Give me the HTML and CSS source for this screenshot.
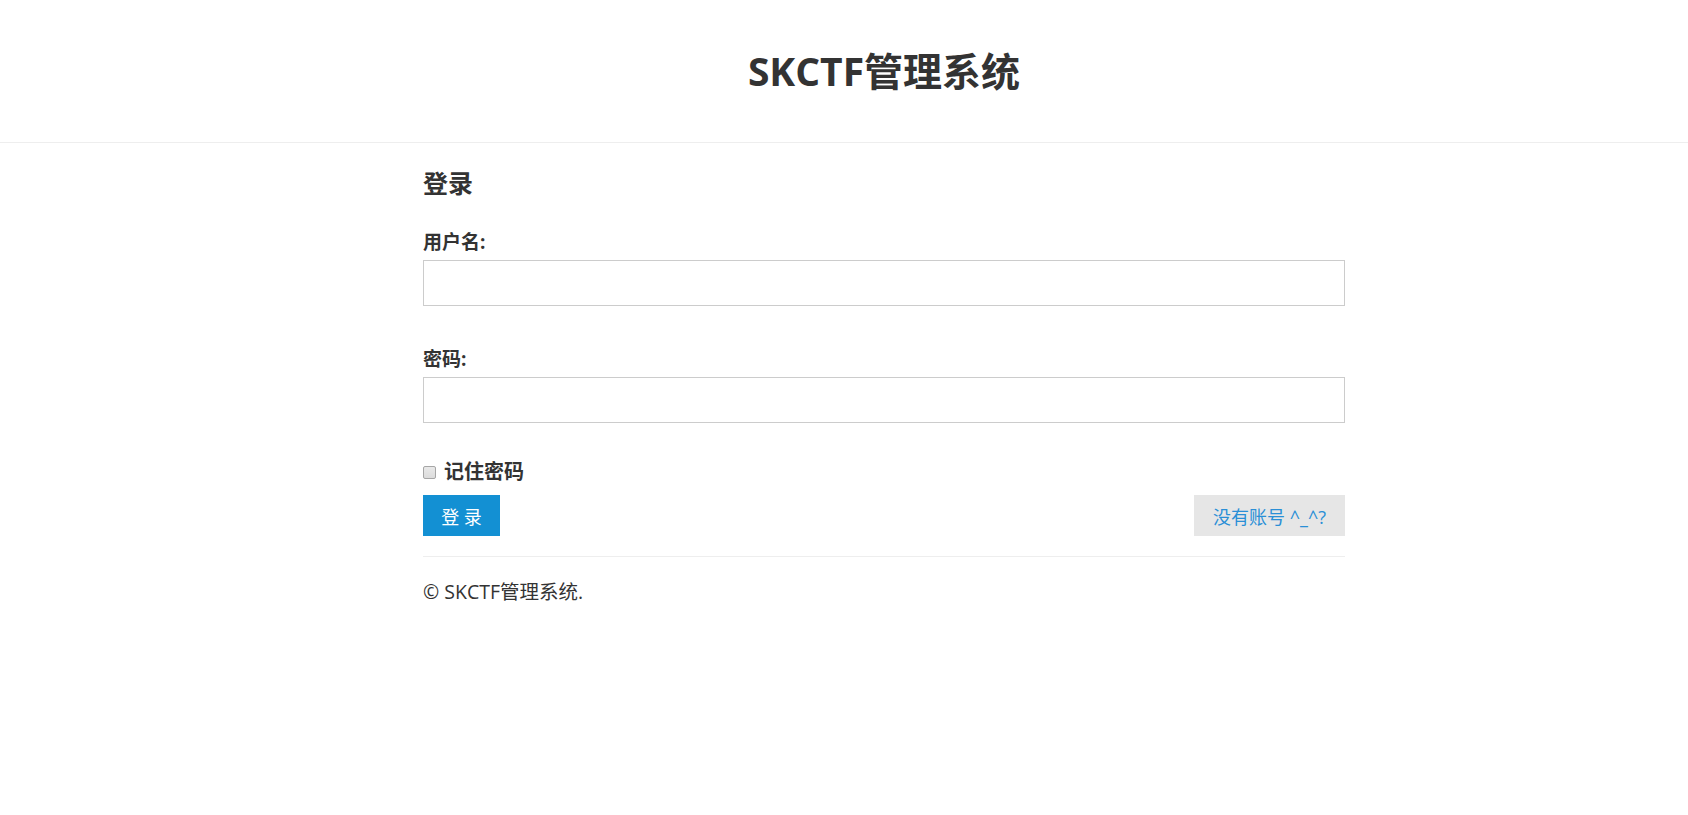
FILE: index.html
```html
<!DOCTYPE html>
<html lang="zh-CN">
<head>
<meta charset="utf-8">
<title>SKCTF管理系统</title>
<link rel="stylesheet" href="styles.css">
</head>
<body>
<header class="site-header">
  <h1 class="site-title">SKCTF管理系统</h1>
</header>
<main class="container">
  <h3 class="page-title">登录</h3>
  <form class="login-form">
    <div class="form-group">
      <label class="form-label" for="username">用户名:</label>
      <input class="form-input" type="text" id="username">
    </div>
    <div class="form-group form-group-last">
      <label class="form-label" for="password">密码:</label>
      <input class="form-input" type="password" id="password">
    </div>
    <div class="remember">
      <input class="remember-box" type="checkbox" id="remember">
      <label class="remember-label" for="remember">记住密码</label>
    </div>
    <div class="actions">
      <button class="btn btn-primary" type="button">登 录</button>
      <a class="btn btn-default" href="#">没有账号 ^_^?</a>
    </div>
  </form>
  <footer class="site-footer">
    <p class="copyright">© SKCTF管理系统.</p>
  </footer>
</main>
</body>
</html>
```
FILE: styles.css
```css
html, body {
  margin: 0;
  padding: 0;
  background: #fff;
}
body {
  font-family: "Open Sans", "Noto Sans CJK SC", sans-serif;
  color: #333;
}
.site-header {
  height: 142px;
  border-bottom: 1px solid #eee;
  display: flex;
  align-items: center;
  justify-content: center;
  padding-left: 80px;
}
.site-title {
  margin: 0;
  font-size: 39px;
  font-weight: 700;
  line-height: 1.2;
  color: #333;
}
.container {
  width: 922px;
  margin-left: 423px;
  padding-top: 25px;
}
.page-title {
  margin: 0 0 32px;
  font-size: 25px;
  line-height: 30px;
  font-weight: 700;
}
.form-group {
  display: flex;
  flex-direction: column;
  margin-bottom: 41px;
}
.form-group-last {
  margin-bottom: 35px;
}
.form-label {
  font-size: 19px;
  font-weight: 700;
  line-height: 24px;
  margin-bottom: 6px;
}
.form-input {
  box-sizing: border-box;
  height: 46px;
  width: 100%;
  border: 1px solid #ccc;
  border-radius: 0;
  padding: 6px 12px;
  font-size: 18px;
  font-family: inherit;
  margin: 0;
}
.remember {
  display: flex;
  align-items: center;
  gap: 8px;
}
.remember-box {
  -webkit-appearance: none;
  appearance: none;
  box-sizing: border-box;
  margin: 0;
  width: 13px;
  height: 13px;
  border: 1px solid #a6a6a6;
  border-radius: 2px;
  background: linear-gradient(#e9e9e9, #dcdcdc);
}
.remember-label {
  font-size: 20px;
  font-weight: 700;
  line-height: 28px;
}
.actions {
  display: flex;
  justify-content: space-between;
  margin-top: 9px;
  padding-bottom: 20px;
  border-bottom: 1px solid #eee;
}
.btn {
  box-sizing: border-box;
  height: 41px;
  display: inline-flex;
  align-items: center;
  justify-content: center;
  font-size: 18px;
  font-family: inherit;
  border: none;
  border-radius: 0;
  text-decoration: none;
  cursor: pointer;
}
.btn-primary {
  width: 77px;
  background: #1390d3;
  color: #fff;
}
.btn-default {
  width: 151px;
  background: #e6e6e6;
  color: #2a8fd6;
}
.site-footer {
  padding-top: 22px;
}
.copyright {
  margin: 0;
  font-size: 19.5px;
  line-height: 26px;
}
```
